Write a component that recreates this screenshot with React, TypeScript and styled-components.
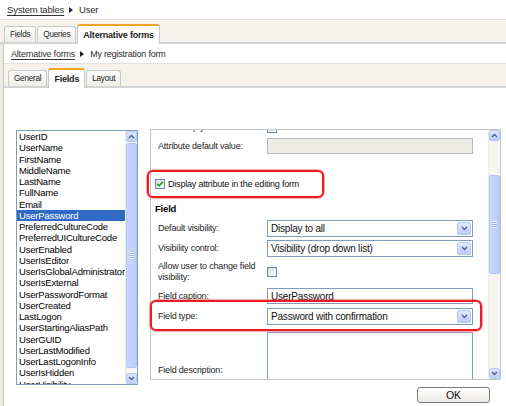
import React from 'react';
import styled, { createGlobalStyle } from 'styled-components';

const GlobalStyle = createGlobalStyle`
  html, body {
    margin: 0;
    padding: 0;
    background: #fff;
  }
  body {
    font-family: "Liberation Sans", Arial, sans-serif;
    font-size: 9.5px;
    letter-spacing: -0.2px;
    color: #000;
  }
  #root {
    width: 506px;
    height: 406px;
    overflow: hidden;
  }
`;

const Page = styled.div`
  width: 506px;
  height: 406px;
  display: flex;
  flex-direction: column;
  overflow: hidden;
`;

const Crumbs = styled.div<{ $indent: number; $size: number }>`
  height: 19px;
  flex: none;
  display: flex;
  align-items: center;
  padding-left: ${({ $indent }) => $indent}px;
  font-size: ${({ $size }) => $size}px;
  color: #2a2a2a;
`;

const CrumbLink = styled.span`
  text-decoration: underline;
  text-underline-offset: 2px;
  color: #333;
`;

const CrumbArrow = styled.span`
  width: 0;
  height: 0;
  border-left: 4px solid #222;
  border-top: 3px solid transparent;
  border-bottom: 3px solid transparent;
  margin: 0 6px 0 5px;
`;

const TabBand = styled.div<{ $pad: number }>`
  height: 22px;
  flex: none;
  display: flex;
  align-items: flex-end;
  gap: 1px;
  padding-left: ${({ $pad }) => $pad}px;
  background: #f5f2eb;
  border-top: 1px solid #e1e1df;
  border-bottom: 2px solid #d0d4d4;
`;

const Tab = styled.div<{ $active?: boolean }>`
  box-sizing: border-box;
  display: flex;
  align-items: center;
  justify-content: center;
  padding: 0 5px;
  border: 1px solid #c3c8c8;
  border-bottom: none;
  border-radius: 3px 3px 0 0;
  height: ${({ $active }) => ($active ? 20 : 16)}px;
  margin-bottom: ${({ $active }) => ($active ? -2 : 0)}px;
  background: ${({ $active }) => ($active ? '#fff' : 'linear-gradient(#fefefe, #eeede8)')};
  border-top: ${({ $active }) => ($active ? '2px solid #f4a328' : '1px solid #c3c8c8')};
  font-size: ${({ $active }) => ($active ? 9 : 8.2)}px;
  font-weight: ${({ $active }) => ($active ? 'bold' : 'normal')};
  letter-spacing: ${({ $active }) => ($active ? -0.2 : -0.25)}px;
  color: #222;
`;

const Frame = styled.div`
  flex: 1;
  display: flex;
  padding-left: 3px;
  background: #eeebe2;
  min-height: 0;
`;

const FrameInner = styled.div`
  flex: 1;
  display: flex;
  flex-direction: column;
  background: #fff;
  border-left: 1px solid #c6c8c4;
  min-width: 0;
`;

const Content = styled.div`
  display: flex;
  flex-direction: column;
  padding: 41px 0 0 12px;
`;

const Columns = styled.div`
  display: flex;
  align-items: flex-start;
  gap: 12px;
`;

const ListBox = styled.div`
  box-sizing: border-box;
  width: 122px;
  height: 255px;
  margin-top: 1px;
  border: 1px solid #7f9db9;
  display: flex;
  background: #fff;
`;

const ListItems = styled.div`
  flex: 1;
  min-width: 0;
  overflow: hidden;
`;

const ListItem = styled.div<{ $selected?: boolean }>`
  height: 11.25px;
  line-height: 11.25px;
  padding-left: 2px;
  white-space: nowrap;
  font-size: 9.5px;
  background: ${({ $selected }) => ($selected ? '#316ac5' : 'transparent')};
  color: ${({ $selected }) => ($selected ? '#fff' : '#000')};
`;

const Bar = styled.div`
  width: 11px;
  flex: none;
  display: flex;
  flex-direction: column;
  background: #f6f5ef;
  border-left: 1px solid #eeede5;
`;

const ScrollButton = styled.div`
  height: 11px;
  flex: none;
  box-sizing: border-box;
  border: 1px solid #b7c9f3;
  border-radius: 2px;
  background: linear-gradient(#dbe5fd, #bccffa);
  display: flex;
  align-items: center;
  justify-content: center;
`;

const Track = styled.div`
  flex: 1;
  display: flex;
  flex-direction: column;
`;

const Thumb = styled.div<{ $top: number; $size: number }>`
  box-sizing: border-box;
  margin-top: ${({ $top }) => $top}px;
  height: ${({ $size }) => $size}px;
  border: 1px solid #b1c6f5;
  border-radius: 2px;
  background: linear-gradient(90deg, #c9d8fc, #b9cdfa);
  display: flex;
  align-items: center;
  justify-content: center;
`;

const Grip = styled.span`
  width: 5px;
  height: 7px;
  background: repeating-linear-gradient(#eef3fe 0 1px, #9fb7ee 1px 2px);
`;

const Chevron: React.FC<{ up?: boolean }> = ({ up }) => (
  <svg width="7" height="5" viewBox="0 0 7 5">
    <polyline
      points={up ? '1,4 3.5,1.5 6,4' : '1,1 3.5,3.5 6,1'}
      fill="none"
      stroke="#4d6185"
      strokeWidth="1.4"
    />
  </svg>
);

const ScrollBar: React.FC<{ top: number; size: number }> = ({ top, size }) => (
  <Bar>
    <ScrollButton>
      <Chevron up />
    </ScrollButton>
    <Track>
      <Thumb $top={top} $size={size}>
        <Grip />
      </Thumb>
    </Track>
    <ScrollButton>
      <Chevron />
    </ScrollButton>
  </Bar>
);

const FormPanel = styled.div`
  box-sizing: border-box;
  width: 351px;
  height: 251px;
  border: 1px solid #c5c7c8;
  display: flex;
  background: #fff;
`;

const Viewport = styled.div`
  flex: 1;
  min-width: 0;
  clip-path: inset(0px -12px);
`;

/* the form is scrolled a little: the first row sits partly above the top edge */
const FormBody = styled.div`
  margin-top: -11px;
  display: flex;
  flex-direction: column;
  font-size: 9px;
`;

const Row = styled.div<{ $h?: number }>`
  position: relative;
  display: flex;
  align-items: center;
  height: ${({ $h }) => $h ?? 20}px;
  flex: none;
`;

const CheckRow = styled(Row)`
  margin-top: 14px;
  padding-left: 4px;
  gap: 3px;
`;

const Label = styled.div`
  box-sizing: border-box;
  width: 116px;
  flex: none;
  padding-left: 7px;
  line-height: 11px;
  color: #1e1e1e;
`;

const Heading = styled(Row)`
  padding-left: 4px;
  font-weight: bold;
  font-size: 9.5px;
`;

const Box = styled.div<{ $disabled?: boolean }>`
  box-sizing: border-box;
  width: 206px;
  height: 16px;
  flex: none;
  display: flex;
  align-items: center;
  padding-left: 3px;
  border: 1px solid ${({ $disabled }) => ($disabled ? '#b1b8c0' : '#7f9db9')};
  background: ${({ $disabled }) => ($disabled ? '#ecebe4' : '#fff')};
  font-size: 10px;
  color: #111;
`;

const SelectBox = styled(Box)`
  padding-right: 1px;
  height: 17px;
`;

const DropButton = styled.span`
  box-sizing: border-box;
  margin-left: auto;
  width: 14px;
  height: 13px;
  border: 1px solid #b7c9f3;
  border-radius: 2px;
  background: linear-gradient(#dfe8fd, #bbcefa);
  display: flex;
  align-items: center;
  justify-content: center;
`;

const TextArea = styled.div`
  box-sizing: border-box;
  width: 206px;
  height: 56px;
  flex: none;
  border: 1px solid #7f9db9;
  background: #fff;
`;

const DescRow = styled.div`
  display: flex;
  align-items: flex-end;
  margin-top: 6px;
`;

const DescLabel = styled(Label)`
  padding-bottom: 12px;
`;

const Check = styled.span`
  box-sizing: border-box;
  width: 10px;
  height: 10px;
  flex: none;
  border: 1px solid #6c88aa;
  background: linear-gradient(135deg, #dcdcd5, #fbfbf9);
  display: flex;
  align-items: center;
  justify-content: center;
`;

const CheckBox: React.FC<{ checked?: boolean }> = ({ checked }) => (
  <Check>
    {checked && (
      <svg width="8" height="8" viewBox="0 0 8 8">
        <polyline points="1.2,3.8 3.1,5.8 6.8,1.8" fill="none" stroke="#1f9f25" strokeWidth="1.7" />
      </svg>
    )}
  </Check>
);

const Annotation = styled.span<{ $t: number; $r: number; $b: number; $l: number }>`
  position: absolute;
  top: ${({ $t }) => $t}px;
  right: ${({ $r }) => $r}px;
  bottom: ${({ $b }) => $b}px;
  left: ${({ $l }) => $l}px;
  border: 2px solid #ec1c24;
  border-radius: 6px;
  box-shadow: 0 0 0 0.6px rgba(236, 28, 36, 0.55), 0 0 2px rgba(236, 28, 36, 0.35);
  pointer-events: none;
`;

const CheckText = styled.span`
  font-size: 9px;
  color: #111;
`;

const Footer = styled.div`
  display: flex;
  justify-content: flex-end;
  padding-right: 16px;
  margin-top: 2px;
`;

const OkButton = styled.div`
  box-sizing: border-box;
  width: 73px;
  height: 16px;
  border: 1px solid #7b7b7b;
  border-radius: 3px;
  background: linear-gradient(#fff, #ebe9e3);
  display: flex;
  align-items: center;
  justify-content: center;
  font-size: 10.5px;
  color: #111;
`;

const fields = [
  'UserID',
  'UserName',
  'FirstName',
  'MiddleName',
  'LastName',
  'FullName',
  'Email',
  'UserPassword',
  'PreferredCultureCode',
  'PreferredUICultureCode',
  'UserEnabled',
  'UserIsEditor',
  'UserIsGlobalAdministrator',
  'UserIsExternal',
  'UserPasswordFormat',
  'UserCreated',
  'LastLogon',
  'UserStartingAliasPath',
  'UserGUID',
  'UserLastModified',
  'UserLastLogonInfo',
  'UserIsHidden',
  'UserVisibility',
];

const Select: React.FC<{ value: string }> = ({ value }) => (
  <SelectBox>
    {value}
    <DropButton>
      <Chevron />
    </DropButton>
  </SelectBox>
);

const App: React.FC = () => {
  return (
    <Page>
      <GlobalStyle />
      <Crumbs $indent={7} $size={9.5}>
        <CrumbLink>System tables</CrumbLink>
        <CrumbArrow />
        <span>User</span>
      </Crumbs>
      <TabBand $pad={4}>
        <Tab>Fields</Tab>
        <Tab>Queries</Tab>
        <Tab $active>Alternative forms</Tab>
      </TabBand>
      <Frame>
        <FrameInner>
          <Crumbs $indent={7} $size={9}>
            <CrumbLink>Alternative forms</CrumbLink>
            <CrumbArrow />
            <span>My registration form</span>
          </Crumbs>
          <TabBand $pad={4}>
            <Tab>General</Tab>
            <Tab $active>Fields</Tab>
            <Tab>Layout</Tab>
          </TabBand>
          <Content>
            <Columns>
              <ListBox>
                <ListItems>
                  {fields.map((f) => (
                    <ListItem key={f} $selected={f === 'UserPassword'}>
                      {f}
                    </ListItem>
                  ))}
                </ListItems>
                <ScrollBar top={1} size={225} />
              </ListBox>
              <FormPanel>
                <Viewport>
                  <FormBody>
                    <Row $h={17}>
                      <Label>Allow empty value:</Label>
                      <CheckBox />
                    </Row>
                    <Row>
                      <Label>Attribute default value:</Label>
                      <Box $disabled />
                    </Row>
                    <CheckRow $h={28}>
                      <CheckBox checked />
                      <CheckText>Display attribute in the editing form</CheckText>
                      <Annotation $t={0} $b={0} $l={-4} $r={164} />
                    </CheckRow>
                    <Heading>Field</Heading>
                    <Row>
                      <Label>Default visibility:</Label>
                      <Select value="Display to all" />
                    </Row>
                    <Row>
                      <Label>Visibility control:</Label>
                      <Select value="Visibility (drop down list)" />
                    </Row>
                    <Row $h={28}>
                      <Label>
                        Allow user to change field
                        <br />
                        visibility:
                      </Label>
                      <CheckBox />
                    </Row>
                    <Row>
                      <Label>Field caption:</Label>
                      <Box>UserPassword</Box>
                    </Row>
                    <Row>
                      <Label>Field type:</Label>
                      <Select value="Password with confirmation" />
                      <Annotation $t={-6} $b={-5} $l={-1} $r={6} />
                    </Row>
                    <DescRow>
                      <DescLabel>Field description:</DescLabel>
                      <TextArea />
                    </DescRow>
                  </FormBody>
                </Viewport>
                <ScrollBar top={34} size={99} />
              </FormPanel>
            </Columns>
            <Footer>
              <OkButton>OK</OkButton>
            </Footer>
          </Content>
        </FrameInner>
      </Frame>
    </Page>
  );
};

export default App;
